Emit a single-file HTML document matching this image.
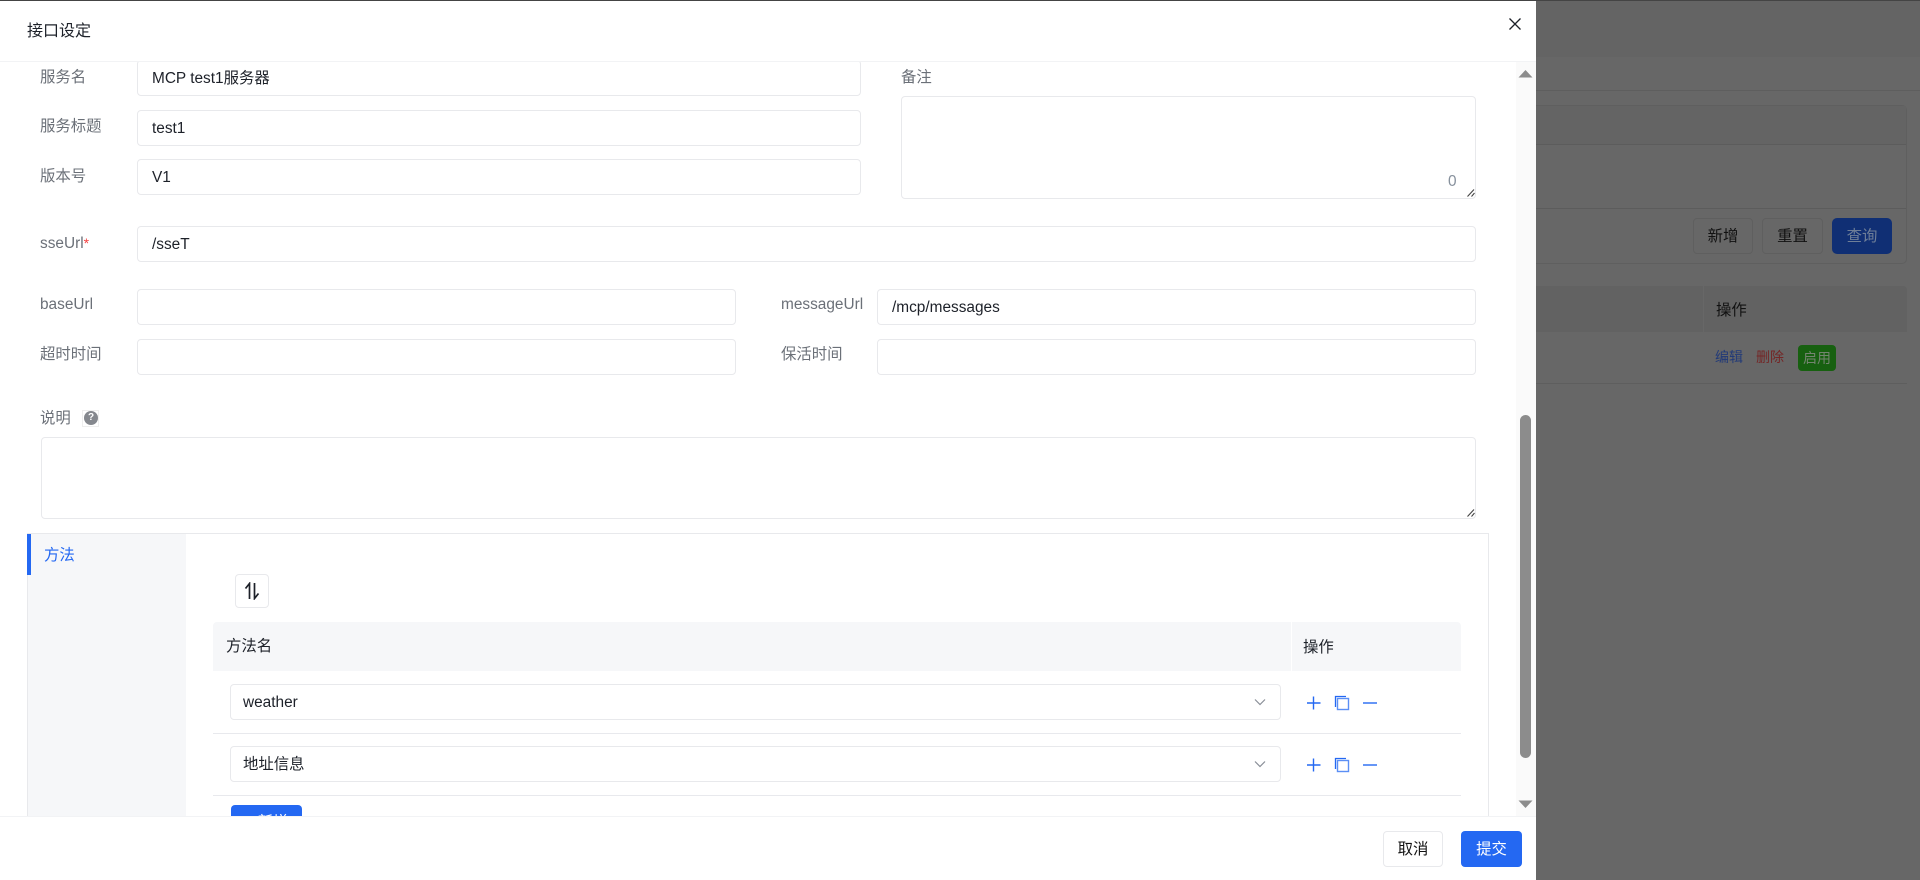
<!DOCTYPE html>
<html lang="zh"><head><meta charset="utf-8"><title>接口设定</title>
<style>
*{box-sizing:border-box}
html,body{margin:0;padding:0;width:1920px;height:880px;overflow:hidden;background:#676767}
body{font-family:"Liberation Sans","Noto Sans CJK SC",sans-serif;font-size:15.4px;color:#1d2129;position:relative}
.a{position:absolute;white-space:nowrap}
.t{position:absolute;white-space:nowrap;line-height:20px;height:20px;margin-top:1px}
.l{color:#6b7078}
.i{position:absolute;background:#fff;border:1px solid #e8e9ec;border-radius:4px;height:36px;line-height:36px;padding-left:14px;white-space:nowrap}
.bgb{position:absolute;border:1px solid #5f5f5f;border-radius:4px;line-height:35px;text-align:center;color:#111}
#modal{position:absolute;left:0;top:1px;width:1536px;height:879px;background:#fff;overflow:hidden}
#body{position:absolute;left:0;top:61px;width:1536px;height:755px;overflow:hidden}
#in{position:absolute;left:0;top:-62px;width:1536px;height:900px}
</style></head><body>
<!-- dim background -->
<div class="a" style="left:1536px;top:0;width:384px;height:57px;background:#646464"></div>
<div class="a" style="left:1536px;top:90px;width:384px;height:1px;background:#5e5e5e"></div>
<div class="a" style="left:1500px;top:105px;width:407px;height:159px;border:1px solid #5f5f5f;border-radius:5px;background:#676767"></div>
<div class="a" style="left:1500px;top:106px;width:406px;height:38px;background:#646464"></div>
<div class="a" style="left:1500px;top:144px;width:406px;height:1px;background:#5c5c5c"></div>
<div class="a" style="left:1500px;top:208px;width:406px;height:1px;background:#5c5c5c"></div>
<div class="bgb" style="left:1693px;top:218px;width:60px;height:36px">新增</div>
<div class="bgb" style="left:1762px;top:218px;width:61px;height:36px">重置</div>
<div class="bgb" style="left:1832px;top:218px;width:60px;height:36px;background:#102f74;border-color:#102f74;color:#6f7f98;line-height:36px;border-radius:5px">查询</div>
<div class="a" style="left:1500px;top:286px;width:407px;height:46px;background:#626262;border-radius:4px 4px 0 0"></div>
<div class="a" style="left:1703px;top:286px;width:1px;height:46px;background:#676767"></div>
<div class="t" style="left:1716px;top:300px;color:#111">操作</div>
<div class="a" style="left:1500px;top:383px;width:407px;height:1px;background:#5e5e5e"></div>
<div class="t" style="left:1715px;top:346px;font-size:14px;color:#223a78">编辑</div>
<div class="t" style="left:1756px;top:346px;font-size:14px;color:#742626">删除</div>
<div class="a" style="left:1798px;top:345px;width:38px;height:26px;background:#176010;border-radius:4px;color:#748470;font-size:14px;line-height:26px;text-align:center">启用</div>
<div class="a" style="left:0;top:0;width:1920px;height:1px;background:#444"></div>

<div id="modal">
  <div class="t" style="left:27px;top:20px;font-size:16px;color:#1d2129">接口设定</div>
  <svg class="a" style="left:1508px;top:16px" width="14" height="14" viewBox="0 0 14 14"><path d="M1.5 1.5L12.5 12.5M12.5 1.5L1.5 12.5" stroke="#1d2129" stroke-width="1.3" fill="none"/></svg>
  <div class="a" style="left:0;top:60px;width:1536px;height:1px;background:#f2f3f5"></div>
  <div id="body"><div id="in">
    <div class="t l" style="left:40px;top:67px">服务名</div>
    <div class="i" style="left:137px;top:60px;width:724px">MCP test1服务器</div>
    <div class="t l" style="left:40px;top:116px">服务标题</div>
    <div class="i" style="left:137px;top:110px;width:724px">test1</div>
    <div class="t l" style="left:40px;top:166px">版本号</div>
    <div class="i" style="left:137px;top:159px;width:724px">V1</div>
    <div class="t l" style="left:901px;top:67px">备注</div>
    <div class="i" style="left:901px;top:96px;width:575px;height:103px"></div>
    <div class="t" style="left:1448px;top:171px;color:#86909c">0</div>
    <svg class="a" style="left:1467px;top:187px" width="8" height="10" viewBox="0 0 8 10"><path d="M0.5 9.5L7 2.5M4.5 9.5L7.5 6" stroke="#444" stroke-width="1.1" fill="none"/></svg>

    <div class="t l" style="left:40px;top:232px">sseUrl<span style="color:#f53f3f;font-size:14px">*</span></div>
    <div class="i" style="left:137px;top:226px;width:1339px">/sseT</div>

    <div class="t l" style="left:40px;top:294px">baseUrl</div>
    <div class="i" style="left:137px;top:289px;width:599px"></div>
    <div class="t l" style="left:781px;top:294px">messageUrl</div>
    <div class="i" style="left:877px;top:289px;width:599px">/mcp/messages</div>
    <div class="t l" style="left:40px;top:344px">超时时间</div>
    <div class="i" style="left:137px;top:339px;width:599px"></div>
    <div class="t l" style="left:781px;top:344px">保活时间</div>
    <div class="i" style="left:877px;top:339px;width:599px"></div>

    <div class="t l" style="left:40px;top:408px">说明</div>
    <div class="a" style="left:82px;top:410px;width:17px;height:17px;border:1px solid #eee"></div>
    <div class="a" style="left:84px;top:411px;width:14px;height:14px;border-radius:50%;background:#85888e;color:#fff;font-size:10px;font-weight:bold;line-height:14px;text-align:center">?</div>
    <div class="i" style="left:41px;top:437px;width:1435px;height:82px"></div>
    <svg class="a" style="left:1467px;top:507px" width="8" height="10" viewBox="0 0 8 10"><path d="M0.5 9.5L7 2.5M4.5 9.5L7.5 6" stroke="#444" stroke-width="1.1" fill="none"/></svg>

    <div class="a" style="left:27px;top:533px;width:1462px;height:340px;border:1px solid #e8e9ec"></div>
    <div class="a" style="left:28px;top:534px;width:158px;height:340px;background:#f6f7f9"></div>
    <div class="a" style="left:27px;top:534px;width:4px;height:41px;background:#2468f2"></div>
    <div class="t" style="left:44px;top:545px;color:#2468f2">方法</div>

    <div class="a" style="left:235px;top:574px;width:34px;height:34px;border:1px solid #e8e9ec;border-radius:4px;background:#fff"></div>
    <svg class="a" style="left:244px;top:582px" width="16" height="18" viewBox="0 0 16 18"><path d="M5.5 17V1.5L1.5 6.5M10.5 1V16.5L14.5 11.5" stroke="#1d2129" stroke-width="1.7" fill="none"/></svg>

    <div class="a" style="left:213px;top:622px;width:1248px;height:49px;background:#f6f7f9;border-radius:4px 4px 0 0"></div>
    <div class="a" style="left:1291px;top:622px;width:1px;height:49px;background:#fff"></div>
    <div class="t" style="left:226px;top:636px">方法名</div>
    <div class="t" style="left:1303px;top:637px">操作</div>

    <div class="i" style="left:230px;top:684px;width:1051px;padding-left:12px">weather</div>
    <svg class="a" style="left:1254px;top:698px" width="12" height="8" viewBox="0 0 12 8"><path d="M1 1.5L6 6.5L11 1.5" stroke="#8a8f98" stroke-width="1.2" fill="none"/></svg>
    <div class="a" style="left:213px;top:733px;width:1248px;height:1px;background:#e8e9ed"></div>
    <div class="i" style="left:230px;top:746px;width:1051px;padding-left:12px">地址信息</div>
    <svg class="a" style="left:1254px;top:760px" width="12" height="8" viewBox="0 0 12 8"><path d="M1 1.5L6 6.5L11 1.5" stroke="#8a8f98" stroke-width="1.2" fill="none"/></svg>
    <div class="a" style="left:213px;top:795px;width:1248px;height:1px;background:#e8e9ed"></div>

    <svg class="a" style="left:1306px;top:695px" width="16" height="16" viewBox="0 0 16 16"><path d="M1 8H14.500M7.500 1.500V14.500" stroke="#2468f2" stroke-width="1.400" fill="none"/></svg>
    <svg class="a" style="left:1334px;top:695px" width="16" height="16" viewBox="0 0 16 16"><path d="M1.500 12V1.500H12" stroke="#2468f2" stroke-width="1.300" fill="none"/><rect x="3.500" y="3.500" width="11" height="11" fill="#fff" stroke="#5b8ff5" stroke-width="1.400"/></svg>
    <svg class="a" style="left:1362px;top:695px" width="16" height="16" viewBox="0 0 16 16"><path d="M1 8H15" stroke="#2468f2" stroke-width="1.400" fill="none"/></svg>
    <svg class="a" style="left:1306px;top:757px" width="16" height="16" viewBox="0 0 16 16"><path d="M1 8H14.500M7.500 1.500V14.500" stroke="#2468f2" stroke-width="1.400" fill="none"/></svg>
    <svg class="a" style="left:1334px;top:757px" width="16" height="16" viewBox="0 0 16 16"><path d="M1.500 12V1.500H12" stroke="#2468f2" stroke-width="1.300" fill="none"/><rect x="3.500" y="3.500" width="11" height="11" fill="#fff" stroke="#5b8ff5" stroke-width="1.400"/></svg>
    <svg class="a" style="left:1362px;top:757px" width="16" height="16" viewBox="0 0 16 16"><path d="M1 8H15" stroke="#2468f2" stroke-width="1.400" fill="none"/></svg>

    <div class="a" style="left:231px;top:805px;width:71px;height:36px;background:#2468f2;border-radius:4px;color:#fff;text-align:center;line-height:36px">+ 新增</div>

    <div class="a" style="left:1516px;top:62px;width:20px;height:754px;background:#fafafa"></div>
    <svg class="a" style="left:1518px;top:69px" width="15" height="9" viewBox="0 0 15 9"><path d="M0.500 8.500L7.500 1L14.500 8.500Z" fill="#8c8c8c"/></svg>
    <svg class="a" style="left:1518px;top:800px" width="15" height="9" viewBox="0 0 15 9"><path d="M0.500 0.500L7.500 8L14.500 0.500Z" fill="#8c8c8c"/></svg>
    <div class="a" style="left:1520px;top:415px;width:11px;height:343px;background:#8c8c8c;border-radius:5.500px"></div>
  </div></div>
  <div class="a" style="left:0;top:815px;width:1536px;height:1px;background:#f2f3f5"></div>
  <div class="a" style="left:1383px;top:830px;width:60px;height:36px;border:1px solid #e8e9ec;border-radius:4px;text-align:center;line-height:36px;color:#111">取消</div>
  <div class="a" style="left:1461px;top:830px;width:61px;height:36px;background:#2468f2;border-radius:4px;text-align:center;line-height:37px;color:#fff">提交</div>
</div>
</body></html>
